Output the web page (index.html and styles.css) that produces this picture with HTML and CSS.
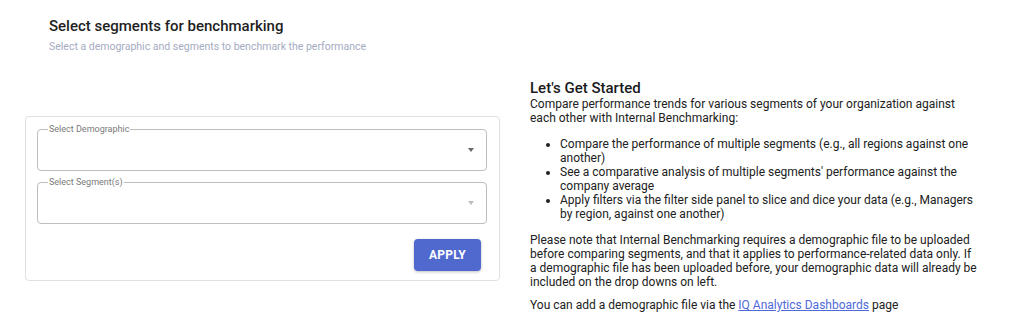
FILE: index.html
```html
<!DOCTYPE html>
<html lang="en">
<head>
    <meta charset="UTF-8">
    <title>Internal Benchmarking</title>
    <link rel="stylesheet" href="styles.css">
</head>
<body>
    <header class="page-header">
        <h1 class="page-title">Select segments for benchmarking</h1>
        <p class="page-subtitle">Select a demographic and segments to benchmark the performance</p>
    </header>

    <main class="bench-row">
        <section class="bench-card">
            <div class="select-field">
                <span class="select-label">Select Demographic</span>
                <span class="select-arrow"></span>
            </div>
            <div class="select-field disabled">
                <span class="select-label">Select Segment(s)</span>
                <span class="select-arrow"></span>
            </div>
            <div class="card-actions">
                <button class="apply-btn">APPLY</button>
            </div>
        </section>

        <section class="intro">
            <h2 class="intro-title">Let's Get Started</h2>
            <p class="intro-text">Compare performance trends for various segments of your organization against each other with Internal Benchmarking:</p>
            <ul class="intro-list">
                <li>Compare the performance of multiple segments (e.g., all regions against one another)</li>
                <li>See a comparative analysis of multiple segments' performance against the company average</li>
                <li>Apply filters via the filter side panel to slice and dice your data (e.g., Managers by region, against one another)</li>
            </ul>
            <p class="intro-text note">Please note that Internal Benchmarking requires a demographic file to be uploaded before comparing segments, and that it applies to performance-related data only. If a demographic file has been uploaded before, your demographic data will already be included on the drop downs on left.</p>
            <p class="intro-text">You can add a demographic file via the <a href="#">IQ Analytics Dashboards</a> page</p>
        </section>
    </main>
</body>
</html>
```

FILE: styles.css
```css
/* Basic reset */
body, html {
    margin: 0;
    padding: 0;
    background-color: #ffffff;
    font-family: 'Roboto', 'Liberation Sans', sans-serif;
    color: #212121;
}

/* Page heading */
.page-header {
    padding: 16px 0 0 49px;
}

.page-title {
    margin: 0;
    font-size: 15px;
    line-height: 20px;
    font-weight: 500;
    color: #1f1f1f;
}

.page-subtitle {
    margin: 4px 0 0;
    font-size: 10.5px;
    line-height: 14px;
    color: #a4abc2;
}

/* Two columns: form card and intro text */
.bench-row {
    display: flex;
    gap: 30px;
    padding: 0 25px;
    margin-top: 26px;
}

.bench-card {
    width: 475px;
    flex-shrink: 0;
    box-sizing: border-box;
    margin-top: 36px;
    padding: 12px 12px 9px 11px;
    border: 1px solid #e0e0e0;
    border-radius: 4px;
    align-self: flex-start;
}

/* Outlined select */
.select-field {
    position: relative;
    height: 42px;
    box-sizing: border-box;
    border: 1px solid #bdbdbd;
    border-radius: 4px;
    display: flex;
    align-items: center;
    justify-content: flex-end;
    padding-right: 12px;
}

.select-field + .select-field {
    margin-top: 11px;
}

.select-label {
    position: absolute;
    top: -7px;
    left: 10px;
    padding: 0 1px;
    background-color: #ffffff;
    font-size: 9px;
    line-height: 12px;
    color: #7a7a7a;
}

.select-arrow {
    width: 0;
    height: 0;
    border-left: 3.5px solid transparent;
    border-right: 3.5px solid transparent;
    border-top: 4px solid #666666;
    margin-top: -1px;
}

.select-field.disabled .select-arrow {
    border-top-color: #bdbdbd;
}

.card-actions {
    display: flex;
    justify-content: flex-end;
    margin-top: 15px;
    padding-right: 6px;
}

.apply-btn {
    height: 32px;
    padding: 0 15px;
    border: none;
    border-radius: 4px;
    background-color: #5069cf;
    color: #ffffff;
    font-family: 'Roboto', 'Liberation Sans', sans-serif;
    font-size: 12px;
    font-weight: 700;
    letter-spacing: 0.2px;
    box-shadow: 0 1px 3px rgba(0, 0, 0, 0.25);
    cursor: pointer;
}

/* Intro text */
.intro {
    width: 450px;
    font-size: 12px;
    line-height: 14px;
}

.intro-title {
    margin: 0;
    font-size: 15px;
    line-height: 17px;
    font-weight: 500;
    color: #1a1a1a;
}

.intro-text {
    margin: 0;
}

.intro-list {
    margin: 12px 0;
    padding-left: 30px;
}

.note {
    margin-bottom: 9px;
}

.intro a {
    color: #4f6ad8;
    text-decoration: underline;
}
```
